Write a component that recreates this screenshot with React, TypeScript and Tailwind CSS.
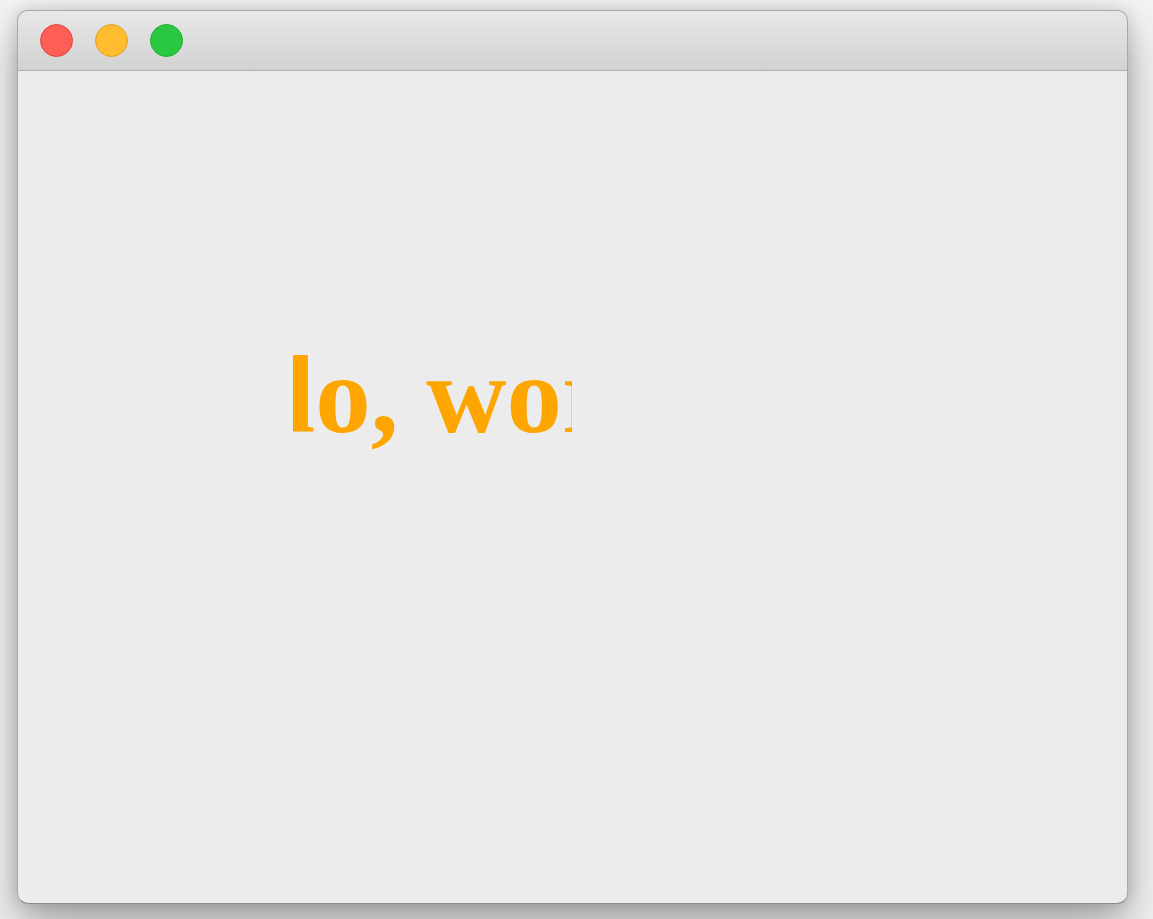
import React from "react";

export default function App() {
  return (
    <div className="w-[1153px] h-[919px] overflow-hidden bg-[#f3f3f3] pt-[10px] pl-[17px]">
      <div className="w-[1111px] h-[894px] rounded-[11px] border border-[#a8a8a8] border-b-[#8a8a8a] bg-[#ececec] overflow-hidden shadow-[0_22px_45px_rgba(0,0,0,0.33),0_0_16px_rgba(0,0,0,0.14)] flex flex-col">
        <div className="h-[60px] shrink-0 bg-gradient-to-b from-[#e9e8e9] to-[#d2d2d2] border-b border-[#b1b1b1] flex items-center gap-[22px] pl-[22px]">
          <div className="w-[33px] h-[33px] rounded-full bg-[#fd5f57] border border-[#e0443e]" />
          <div className="w-[33px] h-[33px] rounded-full bg-[#febc2e] border border-[#dea123]" />
          <div className="w-[33px] h-[33px] rounded-full bg-[#2ac840] border border-[#1fae30]" />
        </div>
        <div className="flex-1 pt-[229px] pl-[275px]">
          <div className="w-[279px] h-[200px] overflow-hidden">
            <div
              className="mt-[39px] ml-[-175px] whitespace-nowrap leading-none font-bold text-[111px] text-[#ffa500]"
              style={{ fontFamily: '"Liberation Serif", "Times New Roman", serif' }}
            >
              Hello, world!
            </div>
          </div>
        </div>
      </div>
    </div>
  );
}
